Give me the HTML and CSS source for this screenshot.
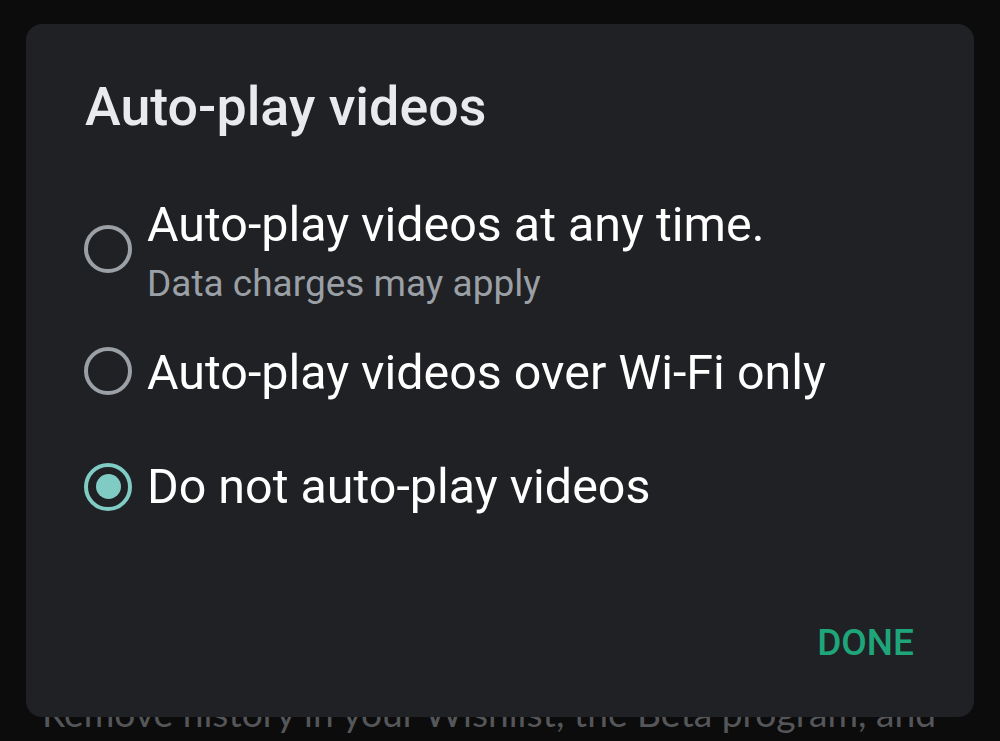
FILE: index.html
```html
<!DOCTYPE html>
<html>
<head>
<meta charset="utf-8">
<link rel="stylesheet" href="styles.css">
</head>
<body>
<div class="page">
  <p class="bg-text">Remove history in your Wishlist, the Beta program, and</p>
</div>
<div class="dialog">
  <h1 class="title">Auto-play videos</h1>
  <div class="options">
    <div class="row row-first">
      <span class="radio lift"></span>
      <div class="label">
        <div class="main">Auto-play videos at any time.</div>
        <div class="sub">Data charges may apply</div>
      </div>
    </div>
    <div class="row">
      <span class="radio lift"></span>
      <div class="label">
        <div class="main">Auto-play videos over Wi-Fi only</div>
      </div>
    </div>
    <div class="row">
      <span class="radio checked"></span>
      <div class="label">
        <div class="main">Do not auto-play videos</div>
      </div>
    </div>
  </div>
  <div class="actions">
    <span class="done">DONE</span>
  </div>
</div>
</body>
</html>
```
FILE: styles.css
```css
html, body {
  margin: 0;
  padding: 0;
}
body {
  width: 1000px;
  height: 741px;
  overflow: hidden;
  background: #0c0c0c;
  position: relative;
  font-family: Roboto, "Liberation Sans", sans-serif;
}
.page {
  padding: 691px 0 0 42px;
}
.bg-text {
  margin: 0;
  font-family: Lato, "Open Sans", sans-serif;
  font-size: 37.2px;
  line-height: 44px;
  color: #555659;
  white-space: nowrap;
}
.dialog {
  position: absolute;
  left: 26px;
  top: 24px;
  width: 948px;
  height: 693px;
  box-sizing: border-box;
  background: #202124;
  border-radius: 16px;
  padding: 50.5px 58px 0 58px;
  display: flex;
  flex-direction: column;
}
.title {
  margin: 0 0 0 1px;
  font-size: 53.8px;
  font-weight: 500;
  line-height: 64px;
  color: #e8eaed;
}
.options {
  margin-top: 48px;
  display: flex;
  flex-direction: column;
}
.row {
  display: flex;
  align-items: center;
  height: 114px;
}
.row-first {
  height: 129px;
}
.radio {
  flex: none;
  width: 40px;
  height: 40px;
  border: 4px solid #9aa0a6;
  border-radius: 50%;
  position: relative;
}
.radio.lift {
  margin-bottom: 4px;
}
.radio.checked {
  border-color: #80cbc4;
}
.radio.checked::after {
  content: "";
  position: absolute;
  left: 7.5px;
  top: 7.5px;
  width: 25px;
  height: 25px;
  border-radius: 50%;
  background: #80cbc4;
}
.label {
  margin-left: 15px;
}
.main {
  font-size: 48.4px;
  line-height: 56px;
  color: #ffffff;
  white-space: nowrap;
}
.sub {
  margin-top: 9px;
  font-size: 37px;
  line-height: 44px;
  color: #9aa0a6;
  white-space: nowrap;
}
.actions {
  margin-top: 77.5px;
  display: flex;
  justify-content: flex-end;
  padding-right: 2px;
}
.done {
  font-size: 37px;
  font-weight: 500;
  line-height: 44px;
  color: #1ea67a;
}
```
